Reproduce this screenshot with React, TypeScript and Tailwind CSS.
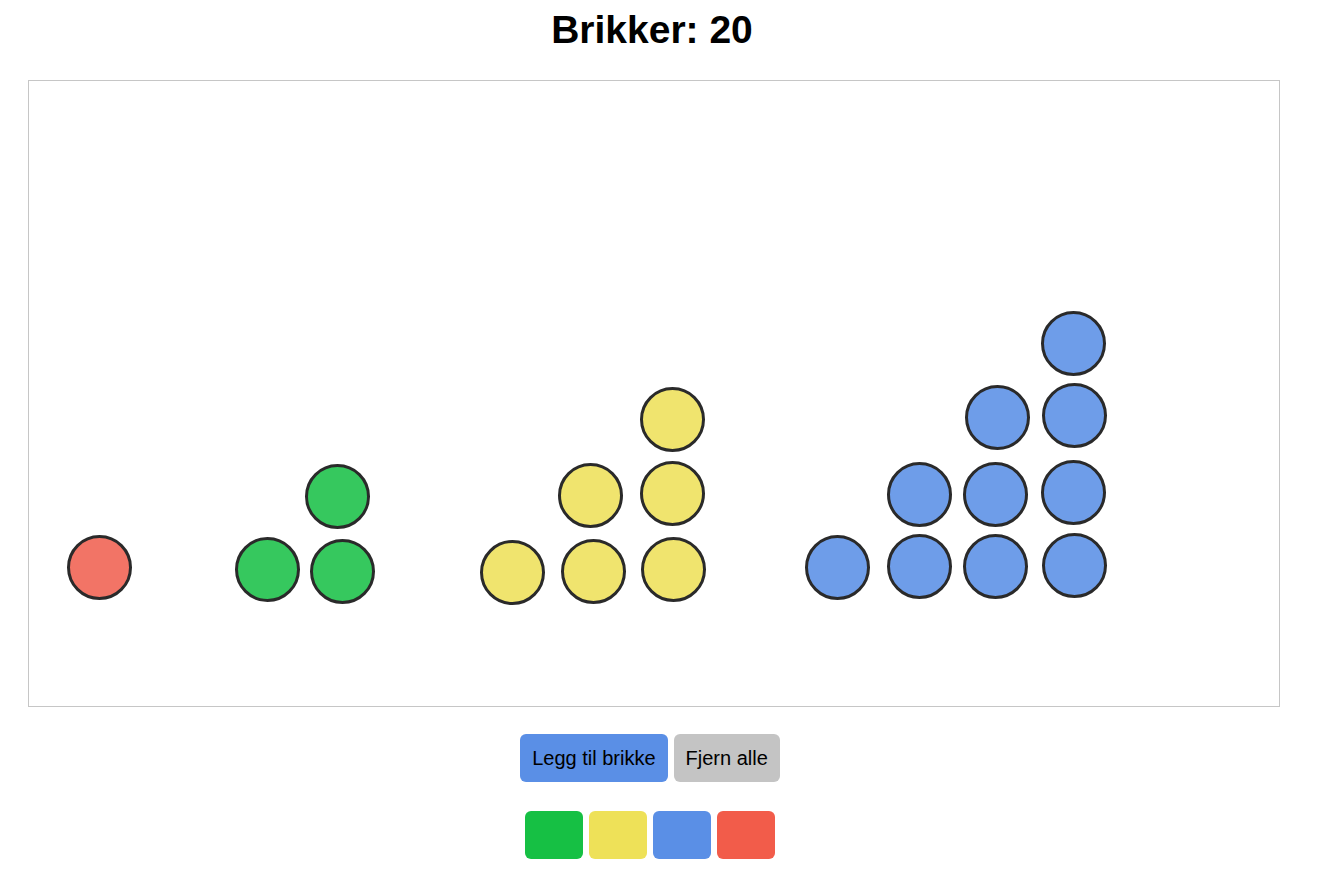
import React from "react";

type Chip = { x: number; y: number; c: string };

const RED = "#f27466";
const GREEN = "#36c85e";
const YELLOW = "#f0e46e";
const BLUE = "#6e9de9";

// positions of the chips on the board (top-left of each 64px circle)
const chips: Chip[] = [
  { x: 38, y: 454, c: RED },

  { x: 206, y: 456, c: GREEN },
  { x: 281, y: 458, c: GREEN },
  { x: 276, y: 383, c: GREEN },

  { x: 451, y: 459, c: YELLOW },
  { x: 532, y: 458, c: YELLOW },
  { x: 612, y: 456, c: YELLOW },
  { x: 529, y: 382, c: YELLOW },
  { x: 611, y: 380, c: YELLOW },
  { x: 611, y: 306, c: YELLOW },

  { x: 776, y: 454, c: BLUE },
  { x: 858, y: 453, c: BLUE },
  { x: 934, y: 453, c: BLUE },
  { x: 1013, y: 452, c: BLUE },
  { x: 858, y: 381, c: BLUE },
  { x: 934, y: 381, c: BLUE },
  { x: 1012, y: 379, c: BLUE },
  { x: 936, y: 304, c: BLUE },
  { x: 1013, y: 302, c: BLUE },
  { x: 1012, y: 230, c: BLUE },
];

const swatches = ["#16c044", "#eee158", "#5a8fe6", "#f25c4a"];

const App = () => {
  return (
    <div
      className="min-h-screen bg-white text-black"
      style={{ fontFamily: '"Liberation Sans", Arial, sans-serif' }}
    >
      <div className="ml-[28px] w-[1252px] flex flex-col items-center">
        <h1 className="mt-[7px] mr-[4px] text-[39px] leading-[45px] font-bold">
          Brikker: {chips.length}
        </h1>

        <div className="relative mt-[28px] w-[1252px] h-[627px] border border-[#c6c6c6]">
          {chips.map((chip, i) => (
            <div
              key={i}
              className="absolute w-[65px] h-[65px] rounded-full border-[3px] border-[#2a2a2a]"
              style={{ left: chip.x, top: chip.y, backgroundColor: chip.c }}
            />
          ))}
        </div>

        <div className="mt-[27px] flex gap-[6px] mr-[8px]">
          <button className="px-3 py-3 text-[20px] leading-[24px] rounded-[6px] bg-[#5a8fe6] text-black">
            Legg til brikke
          </button>
          <button className="px-3 py-3 text-[20px] leading-[24px] rounded-[6px] bg-[#c4c4c4] text-black">
            Fjern alle
          </button>
        </div>

        <div className="mt-[29px] flex gap-[6px] mr-[8px]">
          {swatches.map((s) => (
            <div
              key={s}
              className="w-[58px] h-[48px] rounded-[6px]"
              style={{ backgroundColor: s }}
            />
          ))}
        </div>
      </div>
    </div>
  );
};

export default App;
